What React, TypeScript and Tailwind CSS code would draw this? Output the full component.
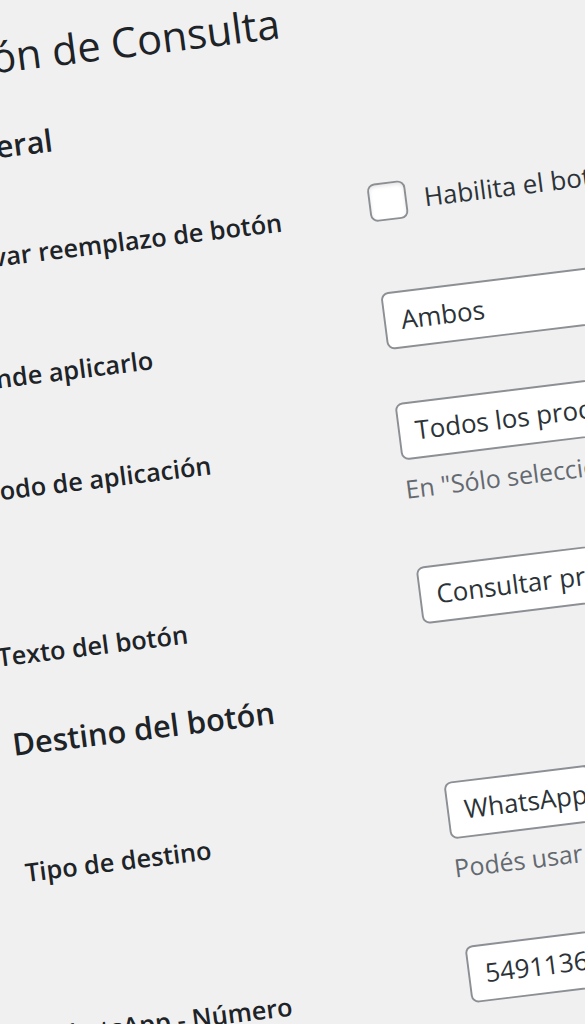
import type { ReactNode } from 'react'

const FONT = { fontFamily: '"Open Sans", "Noto Sans", Arial, sans-serif' }

const LABEL = 'ml-[-2px] text-[13.2px] leading-[18px] font-semibold text-[#1d2327] whitespace-nowrap'
const FIELD =
  'h-[30px] w-[350px] flex items-center px-[8px] rounded-[4px] border border-[#8c8f94] bg-white text-[13.5px] text-[#2c3338] whitespace-nowrap overflow-hidden'
const DESC = 'mt-[6px] text-[13px] leading-[18px] text-[#646970] whitespace-nowrap'

function Row({
  label,
  children,
  height,
  thPad = 'pt-[22px]',
  tdPad = 'pt-[15px]',
}: {
  label: string
  children: ReactNode
  height: string
  thPad?: string
  tdPad?: string
}) {
  return (
    <div className={`flex ${height}`}>
      <div className={`w-[220px] shrink-0 ${thPad}`}>
        <span className={LABEL}>{label}</span>
      </div>
      <div className={tdPad}>{children}</div>
    </div>
  )
}

export default function App() {
  return (
    <div className="h-[1024px] w-[585px] overflow-hidden bg-[#f0f0f1]" style={FONT}>
      {/* settings screen, seen at an angle */}
      <div className="w-[760px] origin-top-left [transform:translate(-84px,-4px)_rotate(-7deg)_scale(1.92)_skewX(0.35deg)] pt-[22px]">
        <h1 className="h-[30px] text-[21.6px] leading-[30px] font-normal text-[#1d2327] whitespace-nowrap">
          Botón de Consulta
        </h1>

        <h2 className="mt-[19px] h-[24px] text-[16px] leading-[24px] font-semibold text-[#1d2327]">
          General
        </h2>

        <div className="mt-[13px]">
          <Row label="Activar reemplazo de botón" height="h-[60px]" thPad="pt-[19px]" tdPad="pt-[18px]">
            <label className="flex items-center gap-[9px] text-[13.5px] leading-[20px] text-[#2c3338] whitespace-nowrap">
              <span className="h-[20px] w-[20px] rounded-[4px] border border-[#8c8f94] bg-white shadow-[inset_0_1px_2px_rgba(0,0,0,0.1)]" />
              Habilita el botón de consulta en lugar de “Añadir al carrito”
            </label>
          </Row>

          <Row label="Dónde aplicarlo" height="h-[58px]">
            <div className={FIELD}>Ambos</div>
          </Row>

          <Row label="Modo de aplicación" height="h-[86px]">
            <div className={FIELD}>Todos los productos</div>
            <p className={DESC}>En "Sólo seleccionados" marcá los productos en su ficha.</p>
          </Row>

          <Row label="Texto del botón" height="h-[60px]">
            <div className={FIELD}>Consultar precio</div>
          </Row>
        </div>

        <h2 className="mt-[9px] h-[24px] text-[16px] leading-[24px] font-semibold text-[#1d2327]">
          Destino del botón
        </h2>

        <div className="mt-[20px]">
          <Row label="Tipo de destino" height="h-[86px]">
            <div className={FIELD}>WhatsApp</div>
            <p className={DESC}>Podés usar WhatsApp o un enlace personalizado.</p>
          </Row>

          <Row label="WhatsApp - Número" height="h-[60px]">
            <div className={FIELD}>5491136000000</div>
          </Row>
        </div>
      </div>
    </div>
  )
}
